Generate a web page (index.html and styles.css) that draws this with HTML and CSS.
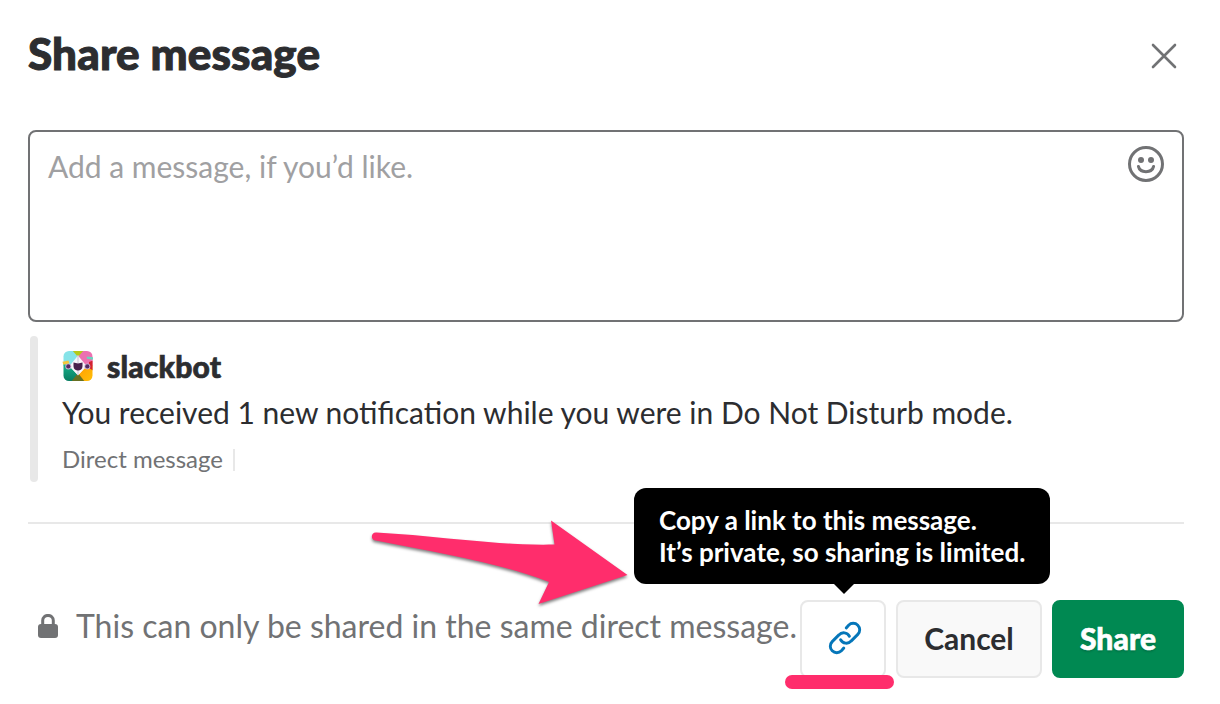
FILE: index.html
```html
<!DOCTYPE html>
<html lang="en">
<head>
<meta charset="utf-8">
<title>Share message</title>
<link rel="stylesheet" href="styles.css">
</head>
<body>
<main class="dialog">
  <header class="header">
    <h1 class="title">Share message</h1>
    <svg class="close" viewBox="0 0 28 28"><path d="M3 3 25 25M25 3 3 25"/></svg>
  </header>

  <div class="composer">
    <span class="placeholder">Add a message, if you’d like.</span>
    <svg class="emoji" viewBox="0 0 38 38">
      <circle class="ring" cx="19" cy="19" r="16.5"/>
      <circle cx="14" cy="15" r="3"/><circle cx="24" cy="15" r="3"/>
      <path class="ring" d="M11.4 21.4C13 28.4 25 28.4 26.600 21.400"/>
    </svg>
  </div>

  <section class="quote">
    <div class="bar"></div>
    <div class="body">
      <div class="author">
        <svg class="avatar" viewBox="0 0 32 32">
          <defs><clipPath id="tile"><rect x="1.500" y="1" width="29" height="30" rx="5.500"/></clipPath>
          <linearGradient id="gold" x2="1" y2="1"><stop stop-color="#ff9c00"/><stop offset="1" stop-color="#ffc20a"/></linearGradient>
          <linearGradient id="teal" x2="0" y2="1"><stop stop-color="#18b48c"/><stop offset="1" stop-color="#087a60"/></linearGradient></defs>
          <g clip-path="url(#tile)">
            <path fill="#86e3e8" d="M0 0h12l4 5v11H0z"/>
            <path fill="#ec70b0" d="M20 0h12v16H16V5z"/>
            <path fill="url(#teal)" d="M0 13 7 16 16 25 10 32H0z"/>
            <path fill="url(#gold)" d="M32 15 25 16 16 25l6 7h10z"/>
            <path fill="#b5c918" d="M10 0h12l-6 7z"/>
            <path fill="#687021" d="m16 23 7 9H9z"/>
            <path fill="#d32331" d="m27 12 5-2v11l-5-3z"/>
            <path fill="#f8f5fa" d="M16 5.500 24.500 16 16 25.500 7.500 16z"/>
            <path stroke="#ccc3d3" d="M16 5v20"/>
          </g>
          <path fill="#47204c" d="M11.500 12.500 16 13.500l4.500-1v3.700c0 5.800-9 5.800-9 0z"/>
          <circle cx="6.300" cy="16.400" r="3" fill="#c9b3d6"/><circle cx="25.300" cy="16.400" r="3" fill="#c9b3d6"/>
          <circle cx="6.300" cy="16.400" r="2.100" fill="#542a63"/><circle cx="25.300" cy="16.400" r="2.100" fill="#542a63"/>
          <path fill="#f5c63b" d="m.5 11.800 6-1.300.8 2.800-6 1.500z"/><path fill="#68d5bd" d="m24.800 6.500 6.200.8v2.500l-6.200-1z"/>
        </svg>
        <strong class="name">slackbot</strong>
      </div>
      <p class="text">You received 1 new notification while you were in Do Not Disturb mode.</p>
      <p class="source"><span>Direct message</span></p>
    </div>
  </section>

  <footer class="footer">
    <svg class="lock" viewBox="0 0 20 24"><rect y="10" width="20" height="14" rx="3"/><path d="M4.700 11V6.500a5.300 5.100 0 0 1 10.600 0V11"/></svg>
    <span class="note">This can only be shared in the same direct message.</span>
    <div class="link-wrap">
      <button class="btn link" aria-label="Copy link">
        <svg class="chain" viewBox="0 0 36 36">
          <path d="M19.200 8 21.600 5.200A6.500 6.500 0 0 1 30.800 14.400L24.100 21.100A6.500 6.500 0 0 1 13.600 19.700"/>
          <path d="M16.800 28 14.400 30.800A6.500 6.500 0 0 1 5.200 21.600L11.900 14.900A6.500 6.500 0 0 1 22.400 16.300"/>
        </svg>
      </button>
      <div class="tooltip">Copy a link to this message.<br>It’s private, so sharing is limited.</div>
      <div class="underline"></div>
    </div>
    <button class="btn cancel">Cancel</button>
    <button class="btn share">Share</button>
    <svg class="arrow" viewBox="0 0 270 100">
      <path d="M16.500 22.500C80 26 140 36 194.500 34.500L191 10.500 267.500 65 178.500 94 189 72C145 54 75 42 14.500 30.200C10.500 29 11 22 16.500 22.500Z"/>
    </svg>
  </footer>
</main>
</body>
</html>
```

FILE: styles.css
```css
* { box-sizing: border-box; }
body {
  margin: 0;
  background: #fff;
  color: #2c2d30;
  font-family: Lato, sans-serif;
  font-size: 30px;
  overflow: hidden;
}
h1, p { margin: 0; }
svg { display: block; flex: none; }
.dialog { height: 704px; padding: 25px 36px 0 28px; }
.header { display: flex; justify-content: space-between; height: 105px; }
.title { font-size: 44px; font-weight: 900; line-height: 56px; letter-spacing: .15px; -webkit-text-stroke: 1px; white-space: nowrap; }
.close { width: 28px; height: 28px; margin: 17px 6px 0 0; fill: none; stroke: #717274; stroke-width: 2.6; stroke-linecap: round; }
.composer {
  display: flex;
  justify-content: space-between;
  height: 192px;
  padding: 12px 17px 0 18px;
  border: 2px solid #717274;
  border-radius: 8px;
}
.placeholder { line-height: 44px; color: #a0a0a2; }
.emoji { width: 38px; height: 38px; margin-top: 1px; fill: #717274; }
.ring { fill: none; stroke: #717274; stroke-width: 3; stroke-linecap: round; }
.quote { display: flex; gap: 24px; height: 146px; margin: 14px 0 0 2px; }
.bar { width: 8px; border-radius: 4px; background: #e8e8e8; }
.body { padding-top: 7px; line-height: 46px; white-space: nowrap; }
.author { display: flex; gap: 13px; height: 46px; }
.avatar { width: 32px; height: 32px; margin-top: 7px; }
.name { font-weight: 900; letter-spacing: .2px; -webkit-text-stroke: .7px; }
.source { display: flex; align-items: center; font-size: 24px; line-height: 48px; color: #717274; }
.source::after { content: ""; width: 2px; height: 22px; margin: 2px 0 0 10px; background: #e8e8e8; }
.footer {
  position: relative;
  display: flex;
  height: 156px;
  margin-top: 40px;
  padding-top: 76px;
  border-top: 2px solid #e8e8e8;
}
.lock { width: 20px; height: 24px; margin: 14px 18px 0 10px; fill: #717274; }
.lock path { fill: none; stroke: #717274; stroke-width: 3; }
.note { width: 724px; font-size: 32px; line-height: 52px; color: #717274; white-space: nowrap; }
.link-wrap { position: relative; }
.btn {
  height: 78px;
  padding: 0 0 2px;
  border: 2px solid #e8e8e8;
  border-radius: 8px;
  font: 700 30px/72px Lato, sans-serif;
  color: #2c2d30;
}
.link { display: grid; place-items: center; width: 86px; padding-left: 4px; background: #fff; }
.chain { width: 36px; height: 36px; fill: none; stroke: #0576b9; stroke-width: 2.9; stroke-linecap: round; }
.cancel { width: 146px; margin-left: 10px; background: #f9f9f9; }
.share {
  width: 132px;
  margin-left: 10px;
  border-color: #008952;
  background: #008952;
  color: #fff;
  font-weight: 900;
  letter-spacing: .1px;
  -webkit-text-stroke: .6px;
  text-shadow: 0 2px 2px rgba(0, 0, 0, .15);
}
.tooltip {
  position: absolute;
  left: -166px;
  bottom: 94px;
  width: 416px;
  height: 96px;
  padding: 16px 25px;
  border-radius: 12px;
  background: #000;
  color: #fff;
  font-size: 26px;
  font-weight: 700;
  line-height: 32px;
  white-space: nowrap;
}
.tooltip::after {
  content: "";
  position: absolute;
  left: 200px;
  top: 96px;
  border: 10px solid transparent;
  border-top-color: #000;
  border-bottom: 0;
}
.underline { position: absolute; left: -15px; top: 75px; width: 109px; height: 14px; border-radius: 7px; background: #ff2d6c; }
.arrow { position: absolute; left: 332px; top: -14px; width: 270px; height: 100px; fill: #ff2d6c; filter: drop-shadow(0 2px 1.5px rgba(0, 0, 0, .5)); }
```
